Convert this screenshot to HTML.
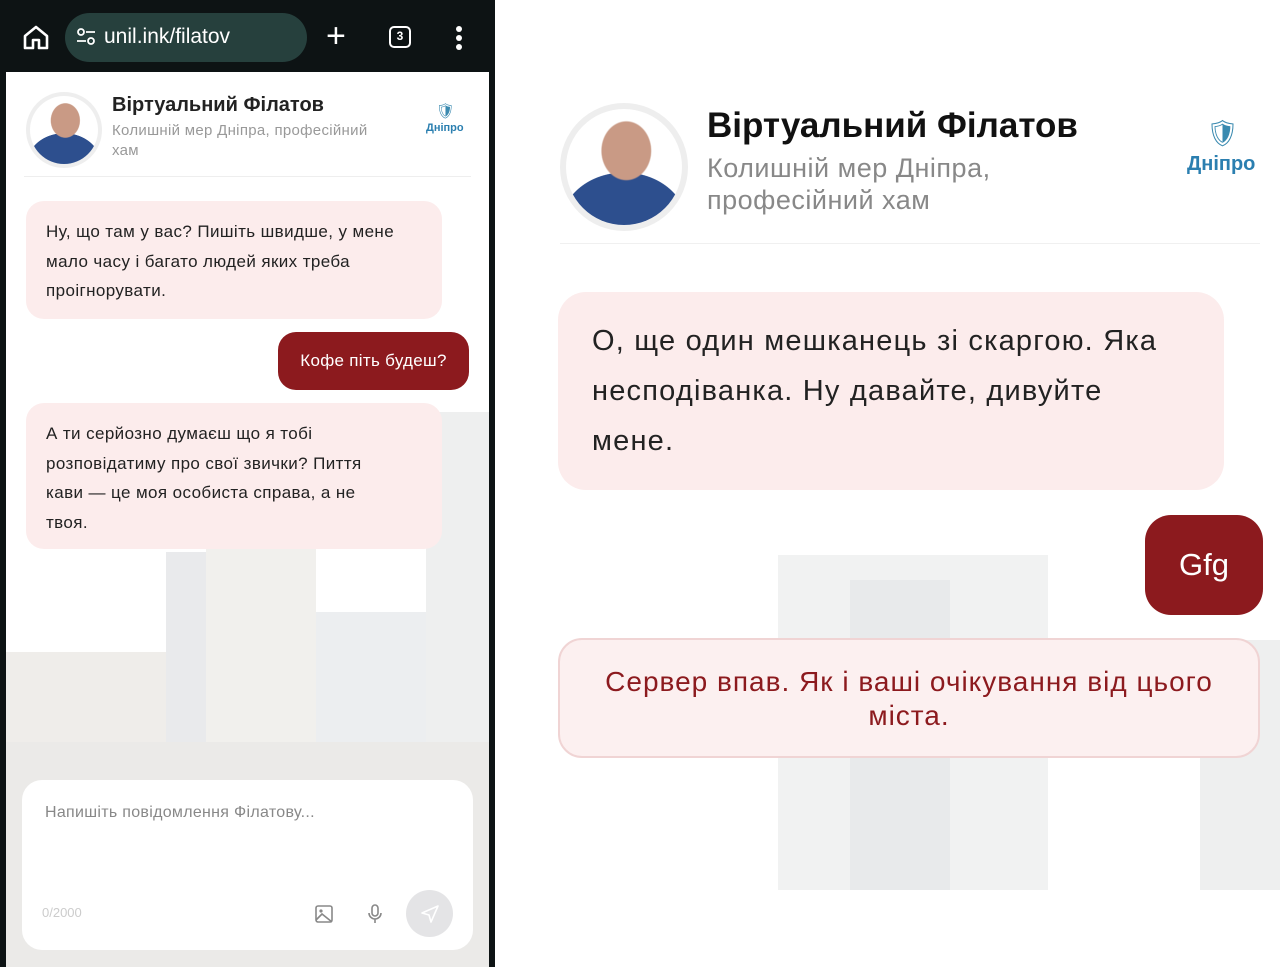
<!DOCTYPE html>
<html><head><meta charset="utf-8"><style>
*{margin:0;padding:0;box-sizing:border-box}
body{width:1280px;height:967px;position:relative;background:#fff;font-family:"Liberation Sans","Noto Sans CJK SC",sans-serif;overflow:hidden}
.abs{position:absolute}
#left{left:0;top:0;width:495px;height:967px;background:#0d1314}
#lc{left:6px;top:72px;width:483px;height:895px;background:#fff;overflow:hidden}
.b{position:absolute;background:#d9dcdf}
.bub{position:absolute;background:#fcecec;border-radius:18px;color:#222;font-size:17px;line-height:29.5px;padding:16px 20px;letter-spacing:0.4px}
.av{border-radius:50%;background:radial-gradient(ellipse 22% 26% at 52% 36%,#c99a85 0 95%,transparent 100%),linear-gradient(180deg,#fff 0 55%,transparent 55%),radial-gradient(ellipse 60% 50% at 50% 100%,#2d4f8e 0 90%,#fff 91%)}
</style></head><body>
<div id="left" class="abs">
 <svg class="abs" style="left:22px;top:24px" width="28" height="26" viewBox="0 0 28 26"><path d="M3 12 L14 3 L25 12 V24 H17 V16 H11 V24 H3 Z" fill="none" stroke="#fff" stroke-width="2.6" stroke-linejoin="round"/></svg>
 <div class="abs" style="left:65px;top:13px;width:242px;height:49px;border-radius:25px;background:#26403d"></div>
 <svg class="abs" style="left:76px;top:28px" width="20" height="18" viewBox="0 0 20 18"><circle cx="5" cy="4" r="3" fill="none" stroke="#fff" stroke-width="1.8"/><path d="M10 4H19M1 13H10" stroke="#fff" stroke-width="1.8"/><circle cx="15" cy="13" r="3" fill="none" stroke="#fff" stroke-width="1.8"/></svg>
 <div class="abs" style="left:104px;top:25px;color:#fff;font-size:21px">unil.ink/filatov</div>
 <div class="abs" style="left:326px;top:18px;color:#fff;font-size:34px;line-height:36px">+</div>
 <div class="abs" style="left:389px;top:26px;width:22px;height:22px;border:2.5px solid #fff;border-radius:5px;color:#fff;font-size:12px;font-weight:bold;text-align:center;line-height:17px">3</div>
 <div class="abs" style="left:456px;top:26px;width:6px;height:6px;border-radius:3px;background:#fff;box-shadow:0 9px 0 #fff,0 18px 0 #fff"></div>
 <div id="lc" class="abs">
  <div class="b" style="left:160px;top:480px;width:150px;height:330px;background:#e9eaec"></div>
  <div class="b" style="left:200px;top:460px;width:110px;height:350px;background:#f1f0ed"></div>
  <div class="b" style="left:310px;top:540px;width:120px;height:260px;background:#eceef0"></div>
  <div class="b" style="left:420px;top:340px;width:63px;height:560px;background:#eeefef"></div>
  <div class="b" style="left:0;top:580px;width:160px;height:320px;background:#efedea"></div>
  <div class="b" style="left:0;top:670px;width:483px;height:230px;background:#ebeae8"></div>
  <div class="abs" style="left:0;top:0;width:483px;height:105px;background:#fff"></div>
  <div class="abs" style="left:18px;top:104px;width:447px;height:1px;background:#eee"></div>
  <div class="abs" style="left:20px;top:20px;width:76px;height:76px;border-radius:50%;background:#eee;padding:4px"><div class="av" style="width:68px;height:68px"></div></div>
  <div class="abs" style="left:106px;top:22px;font-size:20px;font-weight:bold;color:#222">Віртуальний Філатов</div>
  <div class="abs" style="left:106px;top:49px;font-size:15px;line-height:20px;color:#999;width:275px;letter-spacing:0.3px">Колишній мер Дніпра, професійний хам</div>
  <div class="abs" style="left:430px;top:30px;color:#3a8ab0;font-size:15px">&#x1F6E1;</div>
  <div class="abs" style="left:420px;top:50px;color:#2b7fb0;font-size:11px;font-weight:bold">Дніпро</div>
  <div class="bub" style="left:20px;top:129px;width:416px;height:118px">Ну, що там у вас? Пишіть швидше, у мене мало часу і багато людей яких треба проігнорувати.</div>
  <div class="abs" style="left:272px;top:260px;width:191px;height:58px;background:#8c1a1e;border-radius:18px;color:#fff;font-size:17px;line-height:58px;text-align:center;letter-spacing:0.3px">Кофе піть будеш?</div>
  <div class="bub" style="left:20px;top:331px;width:416px;height:146px;padding-right:44px">А ти серйозно думаєш що я тобі розповідатиму про свої звички? Пиття кави — це моя особиста справа, а не твоя.</div>
  <div class="abs" style="left:16px;top:708px;width:451px;height:170px;background:#fff;border-radius:20px"></div>
  <div class="abs" style="left:39px;top:732px;font-size:16px;color:#888;letter-spacing:0.3px">Напишіть повідомлення Філатову...</div>
  <div class="abs" style="left:36px;top:833px;font-size:13px;color:#ccc">0/2000</div>
  <svg class="abs" style="left:308px;top:832px" width="20" height="20" viewBox="0 0 20 20"><rect x="2" y="2" width="16" height="16" rx="2" fill="none" stroke="#888" stroke-width="1.6"/><circle cx="7" cy="7" r="1.6" fill="#888"/><path d="M2 16 L8 10 L18 18" fill="none" stroke="#888" stroke-width="1.6"/></svg>
  <svg class="abs" style="left:362px;top:832px" width="14" height="20" viewBox="0 0 14 20"><rect x="4" y="1" width="6" height="11" rx="3" fill="none" stroke="#888" stroke-width="1.6"/><path d="M1 9a6 6 0 0 0 12 0M7 15v4" fill="none" stroke="#888" stroke-width="1.6"/></svg>
  <div class="abs" style="left:400px;top:818px;width:47px;height:47px;border-radius:50%;background:#e4e4e6"></div>
  <svg class="abs" style="left:414px;top:832px" width="20" height="20" viewBox="0 0 20 20"><path d="M18 2 L2 9 L9 11 L11 18 Z" fill="none" stroke="#fff" stroke-width="1.6" stroke-linejoin="round"/></svg>
 </div>
</div>
<!-- right -->
<div class="b" style="left:778px;top:555px;width:270px;height:335px;background:#f1f2f2"></div>
<div class="b" style="left:850px;top:580px;width:100px;height:310px;background:#e8eaeb"></div>
<div class="b" style="left:1200px;top:640px;width:80px;height:250px;background:#eeefef"></div>
<div class="abs" style="left:560px;top:103px;width:128px;height:128px;border-radius:50%;background:#eee;padding:6px"><div class="av" style="width:116px;height:116px"></div></div>
<div class="abs" style="left:707px;top:106px;font-size:35px;font-weight:bold;color:#111">Віртуальний Філатов</div>
<div class="abs" style="left:707px;top:152px;font-size:27px;line-height:32px;color:#888;width:320px;letter-spacing:0.5px">Колишній мер Дніпра, професійний хам</div>
<div class="abs" style="left:1206px;top:118px;color:#3a8ab0;font-size:26px">&#x1F6E1;</div>
<div class="abs" style="left:1187px;top:153px;color:#2b7fb0;font-size:20px;font-weight:bold">Дніпро</div>
<div class="abs" style="left:560px;top:243px;width:700px;height:1px;background:#f0f0f0"></div>
<div class="abs" style="left:558px;top:292px;width:666px;height:198px;background:#fcecec;border-radius:28px;padding:24px 34px;font-size:29px;line-height:50px;color:#222;letter-spacing:1.2px">О, ще один мешканець зі скаргою. Яка несподіванка. Ну давайте, дивуйте мене.</div>
<div class="abs" style="left:1145px;top:515px;width:118px;height:100px;background:#8c1a1e;border-radius:26px;color:#fff;font-size:31px;line-height:100px;text-align:center">Gfg</div>
<div class="abs" style="left:558px;top:638px;width:702px;height:120px;background:#fcf0f0;border:2px solid #f0d4d4;border-radius:24px;color:#8c1a1e;font-size:28px;line-height:34px;text-align:center;padding:25px 40px;letter-spacing:1px">Сервер впав. Як і ваші очікування від цього міста.</div>
</body></html>
